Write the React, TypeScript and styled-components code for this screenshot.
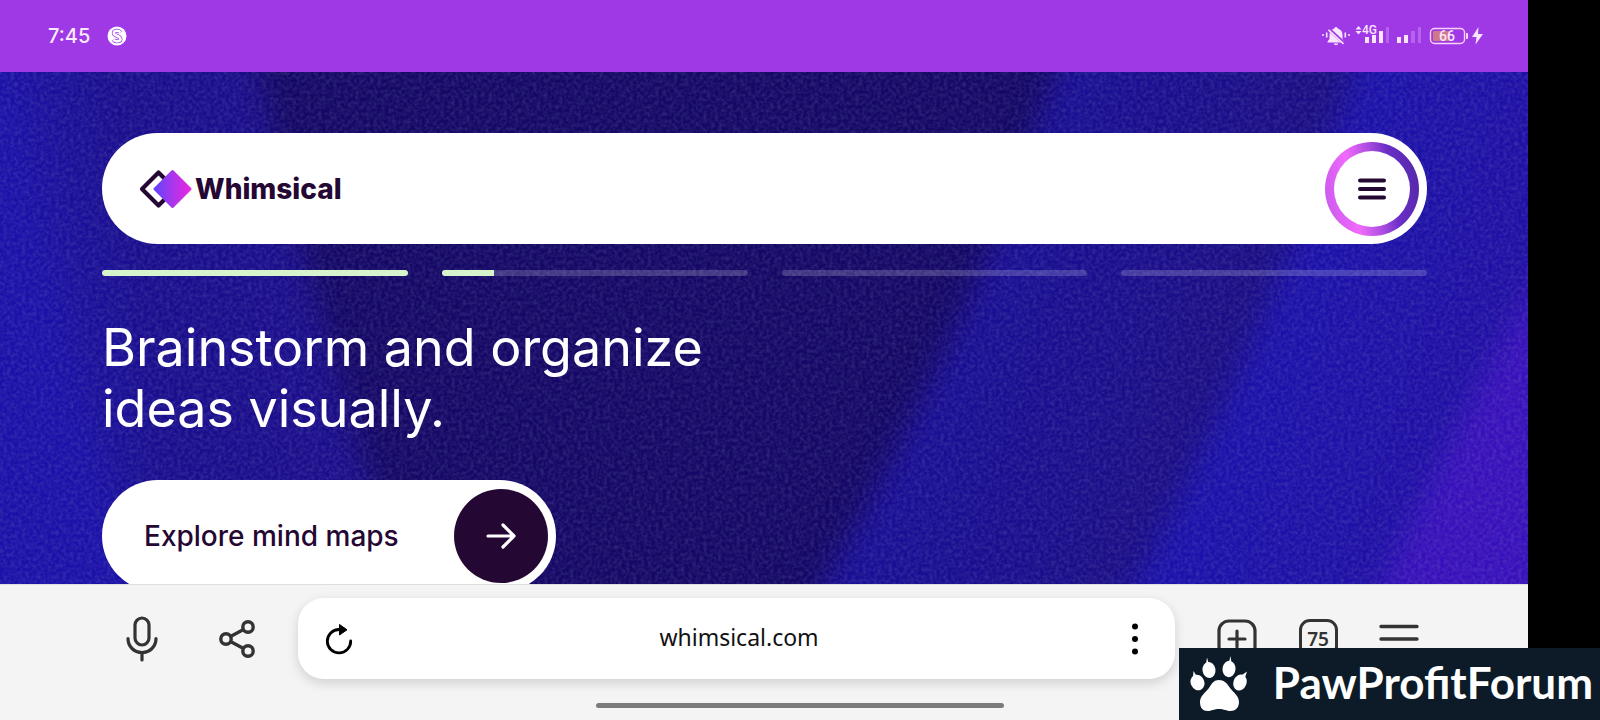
import React from "react";
import styled, { createGlobalStyle } from "styled-components";

const GlobalStyle = createGlobalStyle`
  * { box-sizing: border-box; }
  body { margin: 0; background: #000; }
  button { border: 0; padding: 0; margin: 0; background: none; font: inherit; color: inherit; cursor: pointer; }
  svg { display: block; }
`;

const ink = "#250733";

const Stage = styled.div`
  position: relative;
  min-height: 100vh;
  padding-right: 72px;
  background: #000;
  font-family: Inter, "Liberation Sans", sans-serif;
`;

const Screen = styled.div`
  display: flex;
  flex-direction: column;
  min-height: 100vh;
`;

const StatusBar = styled.header`
  display: flex;
  align-items: center;
  justify-content: space-between;
  height: 72px;
  padding: 0 44px 0 48px;
  background: #9f38e5;
  color: #fbeaff;
`;

const StatusGroup = styled.div<{ $gap: number }>`
  display: flex;
  align-items: center;
  gap: ${(p) => p.$gap}px;
`;

const Clock = styled.time`
  font-size: 20px;
  line-height: 24px;
  font-weight: 500;
`;

const Hero = styled.main`
  position: relative;
  flex: 1 0 0;
  height: 512px;
  min-height: 0;
  overflow: hidden;
  background: #190a72;
`;

const Backdrop = styled.svg`
  position: absolute;
  inset: 0;
  width: 100%;
  height: 100%;
`;

const HeroContent = styled.div`
  position: relative;
  display: flex;
  flex-direction: column;
  align-items: flex-start;
  padding: 61px 101px 0 102px;
`;

const NavBar = styled.nav`
  display: flex;
  align-items: center;
  justify-content: space-between;
  width: 100%;
  height: 111px;
  padding: 0 8px 0 37px;
  border-radius: 56px;
  background: #fff;
`;

const Brand = styled.a`
  display: flex;
  align-items: center;
  gap: 3px;
  color: ${ink};
  font-size: 28px;
  line-height: 36px;
  font-weight: 800;
  text-decoration: none;
`;

const MenuButton = styled.button`
  display: grid;
  place-items: center;
  width: 94px;
  height: 94px;
  border-radius: 50%;
  background: linear-gradient(80deg, #c456ec 0%, #f06bfb 32%, #a94be0 54%, #6a2ec6 70%, #4f27a4 100%);
`;

const MenuFace = styled.span`
  display: grid;
  place-items: center;
  width: 76px;
  height: 76px;
  border-radius: 50%;
  background: #fff;
`;

const Steps = styled.div`
  display: grid;
  grid-template-columns: repeat(4, 1fr);
  gap: 34px;
  width: 100%;
  margin-top: 26px;
`;

const Step = styled.div`
  height: 6px;
  border-radius: 3px;
  overflow: hidden;
  background: rgba(255, 255, 255, 0.19);
`;

const StepFill = styled.div`
  height: 100%;
  background: #d7f5cd;
`;

const Headline = styled.h1`
  max-width: 680px;
  margin: 41px 0 0;
  color: #fff;
  font-size: 52px;
  line-height: 61px;
  font-weight: 400;
`;

const CallToAction = styled.a`
  display: flex;
  align-items: center;
  justify-content: space-between;
  width: 454px;
  height: 112px;
  margin-top: 41px;
  padding: 0 8px 0 42px;
  border-radius: 56px;
  background: #fff;
  color: ${ink};
  font-size: 28px;
  line-height: 36px;
  font-weight: 500;
  text-decoration: none;
`;

const ArrowDisc = styled.span`
  display: grid;
  place-items: center;
  width: 94px;
  height: 94px;
  border-radius: 50%;
  background: ${ink};
`;

const BrowserBar = styled.footer`
  display: flex;
  flex-direction: column;
  align-items: center;
  height: 136px;
  padding: 13px 102px 0 115px;
  border-top: 1px solid #dedede;
  background: #f4f4f4;
  color: #333;
`;

const BrowserRow = styled.div`
  display: flex;
  align-items: center;
  width: 100%;
`;

const ToolGroup = styled.div<{ $gap: number }>`
  display: flex;
  align-items: center;
  gap: ${(p) => p.$gap}px;
`;

const ToolButton = styled.button`
  display: grid;
  place-items: center;
  width: 54px;
  height: 54px;
`;

const AddressBar = styled.div`
  display: flex;
  align-items: center;
  flex: 1;
  height: 81px;
  margin: 0 35px 0 34px;
  padding: 0 13px 0 14px;
  border-radius: 26px;
  background: #fff;
  box-shadow: 0 4px 12px rgba(0, 0, 0, 0.15);
  color: #000;
`;

const AddressInput = styled.input`
  flex: 1;
  min-width: 0;
  border: 0;
  padding: 0 0 4px 4px;
  outline: 0;
  background: none;
  color: #111;
  font-family: "Noto Sans", sans-serif;
  font-size: 23px;
  line-height: 32px;
  text-align: center;
`;

const HomeIndicator = styled.div`
  width: 408px;
  height: 5px;
  margin: 24px 0 0 58px;
  border-radius: 3px;
  background: #7b7b7b;
`;

const Watermark = styled.aside`
  position: absolute;
  right: 0;
  bottom: 0;
  display: flex;
  align-items: center;
  justify-content: space-between;
  width: 421px;
  height: 72px;
  padding: 0 7px 0 11px;
  background: #0c1b27;
  color: #fff;
`;

const WatermarkName = styled.span`
  padding-bottom: 4px;
  font-family: Lato, sans-serif;
  font-size: 44px;
  line-height: 56px;
  font-weight: 700;
`;

const HeroBackdrop = () => (
  <Backdrop viewBox="0 0 1528 512" preserveAspectRatio="none" aria-hidden="true">
    <defs>
      <linearGradient id="left" x1="0" x2="400" y1="60" y2="0" gradientUnits="userSpaceOnUse">
        <stop offset="0" stopColor="#1b10a8" />
        <stop offset="0.3" stopColor="#1a0d8c" />
        <stop offset="1" stopColor="#1b0d8a" />
      </linearGradient>
      <linearGradient id="middle" x1="960" x2="1290" y1="180" y2="290" gradientUnits="userSpaceOnUse">
        <stop offset="0" stopColor="#190e96" />
        <stop offset="1" stopColor="#1a0c80" />
      </linearGradient>
      <linearGradient id="right" x1="1250" x2="1528" y1="200" y2="290" gradientUnits="userSpaceOnUse">
        <stop offset="0" stopColor="#1b10ab" />
        <stop offset="1" stopColor="#200fa2" />
      </linearGradient>
      <filter id="soft" x="-20%" y="-20%" width="140%" height="140%" colorInterpolationFilters="sRGB">
        <feGaussianBlur stdDeviation="14" />
      </filter>
      <filter id="grain" x="0" y="0" width="100%" height="100%" colorInterpolationFilters="sRGB">
        <feTurbulence type="fractalNoise" baseFrequency="0.27" numOctaves="3" seed="4" />
        <feColorMatrix values="0 0 0 0 0.6  0 0 0 0 0.65  0 0 0 0 0.8  1.2 0 0 0 -0.4" />
      </filter>
    </defs>
    <rect width="1528" height="512" fill="#140765" />
    <g filter="url(#soft)">
      <path d="M-60-40H250Q300 200 415 552H-60Z" fill="url(#left)" />
      <path d="M-60-40H5Q40 240 150 552H-60Z" fill="#1b10a8" />
      <path d="M1065-40Q990 230 800 552H1620V-40Z" fill="url(#middle)" />
      <path d="M1365-40Q1290 220 1115 552H1620V-40Z" fill="url(#right)" />
      <path d="M1580 140Q1480 290 1365 552H1620Z" fill="#3810bb" />
    </g>
    <rect width="1528" height="512" filter="url(#grain)" opacity="0.3" />
  </Backdrop>
);

const CoinIcon = () => (
  <svg width="20" height="20" viewBox="0 0 20 20" aria-hidden="true">
    <circle cx="10" cy="10" r="9.5" fill="#fff" />
    <path d="M13.500 6.500C12 4 6.800 4.300 6.800 7c0 3.400 6.700 2.400 6.700 6 0 3-5.500 3-7 .6" fill="none" stroke="#9f38e5" strokeWidth="4" />
    <path d="M13.500 6.500C12 4 6.800 4.300 6.800 7c0 3.400 6.700 2.400 6.700 6 0 3-5.500 3-7 .6" fill="none" stroke="#fff" strokeWidth="2.600" />
  </svg>
);

const StatusIcons = () => (
  <svg width="162" height="24" viewBox="1322 24 162 24" fill="#fbe4ff" role="img" aria-label="Muted, 4G, battery 66 percent, charging">
    <circle cx="1323" cy="35" r="1" />
    <circle cx="1349" cy="35" r="1" />
    <path d="M1326.700 32.500v5M1345.300 32.500v5" stroke="#fbe4ff" strokeWidth="1.600" />
    <path d="M1336 27a1.800 1.800 0 0 1 1.800 1.500c3 .8 4.700 3.300 4.700 6.500v4l2 2.500v1h-17v-1l2-2.500v-4c0-3.200 1.700-5.700 4.700-6.500A1.800 1.800 0 0 1 1336 27zM1333.800 43.500h4.400a2.200 1.800 0 0 1-4.400 0z" />
    <path d="M1328 28.500l17 15.500" stroke="#9f38e5" strokeWidth="3.600" />
    <path d="M1328.500 29.800l15 14" stroke="#fbe4ff" strokeWidth="1.600" />
    <path d="M1355.500 29.500l3-3.500 3 3.500zM1355.500 31h6l-3 3.500z" />
    <text x="1362" y="34" fontFamily="Roboto, sans-serif" fontSize="12" fontWeight="500">4G</text>
    <rect x="1365" y="37" width="4" height="6" />
    <rect x="1372" y="35" width="4" height="8" />
    <rect x="1379" y="31" width="4" height="12" />
    <rect x="1386" y="27" width="3" height="16" opacity="0.25" />
    <rect x="1397" y="37" width="4" height="6" />
    <rect x="1404" y="35" width="4" height="8" />
    <rect x="1411" y="31" width="4" height="12" opacity="0.25" />
    <rect x="1418" y="27" width="3" height="16" opacity="0.25" />
    <rect x="1433" y="31" width="17" height="10" rx="1" fill="#cf7886" />
    <rect x="1430.500" y="28.500" width="34" height="15" rx="4" fill="none" stroke="#fbd3f6" strokeWidth="1.400" />
    <path d="M1466 33h1a1 1 0 0 1 1 1v4a1 1 0 0 1-1 1h-1z" fill="#fbd3f6" />
    <text x="1447" y="41" textAnchor="middle" fontFamily="Roboto, sans-serif" fontSize="14" fontWeight="500">66</text>
    <path d="M1478.500 27l-6.500 10h4.500l-1 7.500 7.500-10.500h-5z" />
  </svg>
);

const BrandMark = () => (
  <svg width="53" height="40" viewBox="0 0 53 40" aria-hidden="true">
    <defs>
      <linearGradient id="mark" x1="14" x2="52" y1="0" y2="0" gradientUnits="userSpaceOnUse">
        <stop offset="0" stopColor="#5b45fb" />
        <stop offset="0.5" stopColor="#a836ec" />
        <stop offset="1" stopColor="#ea27df" />
      </linearGradient>
    </defs>
    <path d="M19.500 3.500L3 20l16.500 16.500L36 20z" fill="none" stroke={ink} strokeWidth="4.200" strokeLinejoin="round" />
    <path d="M33.500 2.500L51 20 33.500 37.500 16 20z" fill="url(#mark)" stroke="url(#mark)" strokeWidth="3" strokeLinejoin="round" />
  </svg>
);

const MenuIcon = () => (
  <svg width="28" height="22" viewBox="0 0 28 22" stroke={ink} strokeWidth="4" strokeLinecap="round" aria-hidden="true">
    <path d="M2 2.500h24M2 11h24M2 19.500h24" />
  </svg>
);

const ArrowIcon = () => (
  <svg width="30" height="26" viewBox="0 0 30 26" fill="none" stroke="#fff" strokeWidth="3.200" strokeLinecap="round" strokeLinejoin="round" aria-hidden="true">
    <path d="M2 13h26M17 2l11 11-11 11" />
  </svg>
);

const MicIcon = () => (
  <svg width="32" height="46" viewBox="0 0 32 46" fill="none" stroke="#333" strokeWidth="3.200" strokeLinecap="round" aria-hidden="true">
    <rect x="9" y="2" width="14" height="27" rx="7" />
    <path d="M2 22.500c0 8 6 14 14 14s14-6 14-14M16 37v7" />
  </svg>
);

const ShareIcon = () => (
  <svg width="36" height="38" viewBox="0 0 36 38" fill="none" stroke="#333" strokeWidth="3.400" aria-hidden="true">
    <circle cx="7" cy="19" r="5.200" />
    <circle cx="29" cy="7" r="5.200" />
    <circle cx="29" cy="31" r="5.200" />
    <path d="M11.500 16.500l13-7M11.500 21.500l13 7" />
  </svg>
);

const ReloadIcon = () => (
  <svg width="28" height="32" viewBox="0 0 28 32" aria-hidden="true">
    <path d="M14 6.500A11.700 11.700 0 1 0 25.700 18" fill="none" stroke="#000" strokeWidth="2.800" strokeLinecap="round" />
    <path d="M14.500 1.500v10.500l7.500-5.200z" stroke="#000" strokeWidth="1" strokeLinejoin="round" />
  </svg>
);

const MoreIcon = () => (
  <svg width="8" height="32" viewBox="0 0 8 32" aria-hidden="true">
    <circle cx="4" cy="3.500" r="3" />
    <circle cx="4" cy="16" r="3" />
    <circle cx="4" cy="28.500" r="3" />
  </svg>
);

const NewTabIcon = () => (
  <svg width="40" height="40" viewBox="0 0 40 40" fill="none" stroke="#333" strokeWidth="3.200" strokeLinecap="round" aria-hidden="true">
    <rect x="2" y="2" width="36" height="36" rx="10" />
    <path d="M20 12v16M12 20h16" />
  </svg>
);

const TabsFrame = styled.span`
  display: grid;
  place-items: center;
  width: 39px;
  height: 39px;
  border: 3px solid #333;
  border-radius: 11px;
  font-family: "Noto Sans", sans-serif;
  font-size: 19px;
  line-height: 24px;
  font-weight: 600;
`;

const LinesIcon = () => (
  <svg width="40" height="40" viewBox="0 0 40 40" stroke="#333" strokeWidth="3.400" strokeLinecap="round" aria-hidden="true">
    <path d="M2 7.500h36M2 20h36M2 32.500h36" />
  </svg>
);

const PawIcon = () => (
  <svg width="58" height="58" viewBox="0 0 58 58" fill="#fff" aria-hidden="true">
    <path d="M29 25c5 0 8 3 11 8 4 5 9 8 9 14 0 6-4 9-8.500 9-4 0-6.500-2-11.500-2s-7.500 2-11.500 2C13 56 10 53 10 47c0-6 5-9 9-14 3-5 5-8 10-8z" />
    <ellipse cx="19" cy="15" rx="6.500" ry="8" transform="rotate(-8 19 15)" />
    <ellipse cx="39" cy="14" rx="6.500" ry="8.200" transform="rotate(8 39 14)" />
    <ellipse cx="7.500" cy="27.500" rx="6.800" ry="8" transform="rotate(-25 7.500 27.500)" />
    <ellipse cx="50" cy="27.500" rx="6.500" ry="8.200" transform="rotate(20 50 27.500)" />
    <path d="M16 9l1-6.500L18.500 8zM39 7l1.500-6L41.500 8zM3 22l.5-6L6 20zM52 20l5-3.500-2 6z" />
  </svg>
);

const steps = [100, 17, 0, 0];

export default function App() {
  return (
    <Stage>
      <GlobalStyle />
      <Screen>
        <StatusBar>
          <StatusGroup $gap={17}>
            <Clock>7:45</Clock>
            <CoinIcon />
          </StatusGroup>
          <StatusIcons />
        </StatusBar>
        <Hero>
          <HeroBackdrop />
          <HeroContent>
            <NavBar>
              <Brand href="#">
                <BrandMark />
                Whimsical
              </Brand>
              <MenuButton aria-label="Open menu">
                <MenuFace>
                  <MenuIcon />
                </MenuFace>
              </MenuButton>
            </NavBar>
            <Steps>
              {steps.map((value, i) => (
                <Step key={i}>
                  <StepFill style={{ width: `${value}%` }} />
                </Step>
              ))}
            </Steps>
            <Headline>
              Brainstorm and organize
              <br />
              ideas visually.
            </Headline>
            <CallToAction href="#">
              Explore mind maps
              <ArrowDisc>
                <ArrowIcon />
              </ArrowDisc>
            </CallToAction>
          </HeroContent>
        </Hero>
        <BrowserBar>
          <BrowserRow>
            <ToolGroup $gap={41}>
              <ToolButton aria-label="Voice search">
                <MicIcon />
              </ToolButton>
              <ToolButton aria-label="Share">
                <ShareIcon />
              </ToolButton>
            </ToolGroup>
            <AddressBar>
              <ToolButton aria-label="Reload">
                <ReloadIcon />
              </ToolButton>
              <AddressInput aria-label="Address" defaultValue="whimsical.com" />
              <ToolButton aria-label="More options">
                <MoreIcon />
              </ToolButton>
            </AddressBar>
            <ToolGroup $gap={27}>
              <ToolButton aria-label="New tab">
                <NewTabIcon />
              </ToolButton>
              <ToolButton aria-label="Open tabs">
                <TabsFrame>75</TabsFrame>
              </ToolButton>
              <ToolButton aria-label="Browser menu">
                <LinesIcon />
              </ToolButton>
            </ToolGroup>
          </BrowserRow>
          <HomeIndicator />
        </BrowserBar>
      </Screen>
      <Watermark>
        <PawIcon />
        <WatermarkName>PawProfitForum</WatermarkName>
      </Watermark>
    </Stage>
  );
}
